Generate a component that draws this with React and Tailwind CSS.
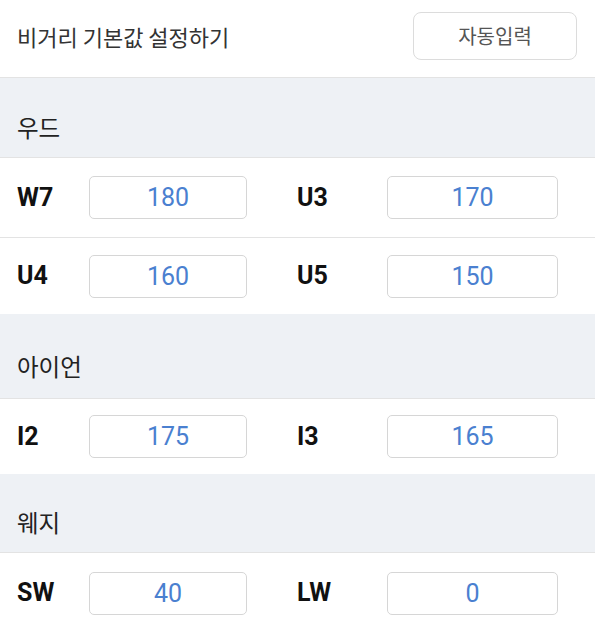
import React, { useState } from "react";

function Field({ value, onChange, width }) {
  return (
    <input
      value={value}
      onChange={(e) => onChange(e.target.value)}
      className={`${width} h-[43px] rounded-[5px] border-[1.5px] border-[#d6d6d6] bg-white text-center font-[Roboto,sans-serif] text-[25px] text-[#4a80d0] outline-none`}
    />
  );
}

function Row({ items, values, setValue, height, border }) {
  const [a, b] = items;
  return (
    <div className={`flex items-center px-[17px] ${height} ${border ? "border-b border-[#e3e3e3]" : ""}`}>
      <span className="w-[72px] font-[Roboto,sans-serif] text-[25px] font-bold text-[#111]">{a}</span>
      <Field width="w-[158px]" value={values[a]} onChange={(v) => setValue(a, v)} />
      <span className="ml-[50px] w-[90px] font-[Roboto,sans-serif] text-[25px] font-bold text-[#111]">{b}</span>
      <Field width="w-[171px]" value={values[b]} onChange={(v) => setValue(b, v)} />
    </div>
  );
}

function Section({ title, height, pad }) {
  return (
    <div className={`border-b border-[#e3e3e3] bg-[#eef1f5] px-[17px] ${height} ${pad}`}>
      <div className="font-['Noto_Sans_CJK_KR',sans-serif] text-[23.5px] leading-[30px] text-[#222]">{title}</div>
    </div>
  );
}

export default function App() {
  const [values, setValues] = useState({
    W7: "180",
    U3: "170",
    U4: "160",
    U5: "150",
    I2: "175",
    I3: "165",
    SW: "40",
    LW: "0",
  });

  const setValue = (k, v) => setValues((prev) => ({ ...prev, [k]: v }));

  return (
    <div className="h-[630px] w-[595px] overflow-hidden bg-white">
      {/* header */}
      <div className="flex h-[78px] items-center justify-between border-b border-[#e3e3e3] pb-[5px] pl-[17px] pr-[18px]">
        <span className="font-['Noto_Sans_CJK_KR',sans-serif] text-[22px] text-[#333]">비거리 기본값 설정하기</span>
        <button className="h-[48px] w-[164px] rounded-[8px] border-[1.5px] border-[#dcdcdc] bg-white font-['Noto_Sans_CJK_KR',sans-serif] text-[20px] text-[#555]">
          자동입력
        </button>
      </div>

      <Section title="우드" height="h-[80px]" pad="pt-[34px]" />
      <Row items={["W7", "U3"]} values={values} setValue={setValue} height="h-[80px]" border />
      <Row items={["U4", "U5"]} values={values} setValue={setValue} height="h-[76px]" />

      <Section title="아이언" height="h-[85px]" pad="pt-[37px]" />
      <Row items={["I2", "I3"]} values={values} setValue={setValue} height="h-[75px]" />

      <Section title="웨지" height="h-[79px]" pad="pt-[33px]" />
      <Row items={["SW", "LW"]} values={values} setValue={setValue} height="h-[80px]" />
    </div>
  );
}
